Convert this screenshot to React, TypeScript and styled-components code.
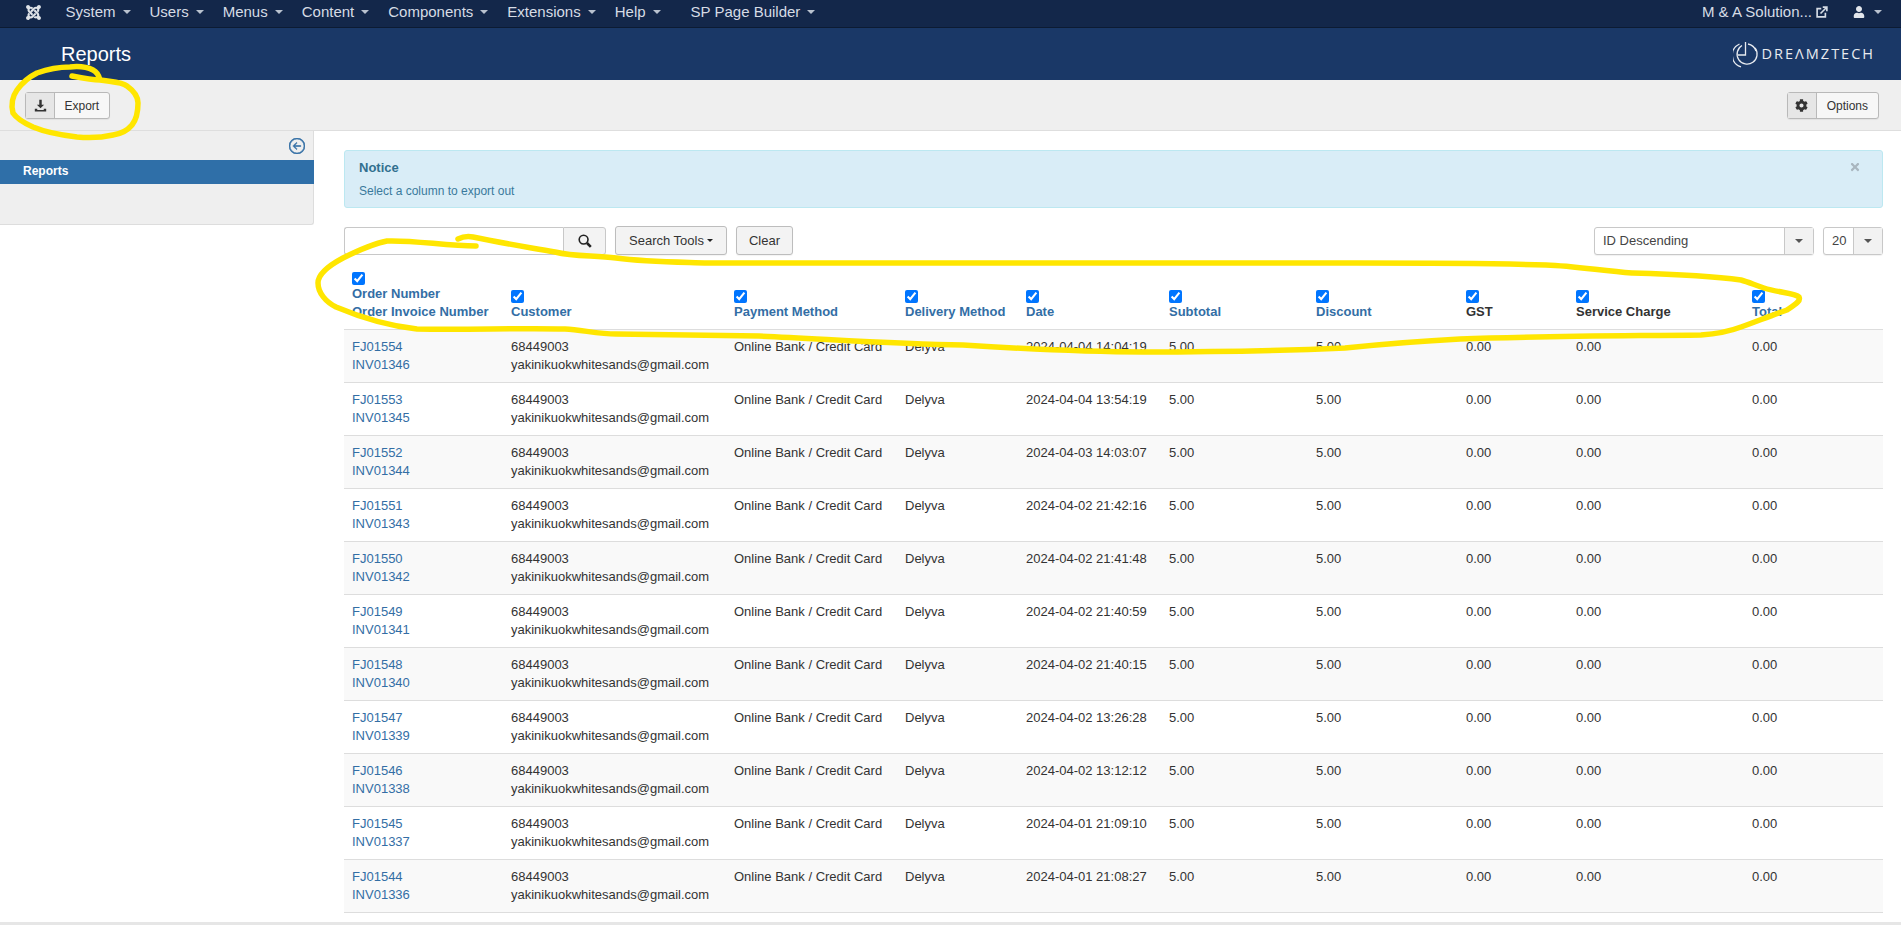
import React from "react";
import styled, { createGlobalStyle } from "styled-components";
import { FaJoomla, FaCog, FaUser, FaTimes } from "react-icons/fa";
import { BsArrowLeftCircle } from "react-icons/bs";

const colors = {
  navDark: "#13274a",
  header: "#1a3867",
  toolbar: "#efefef",
  link: "#336ea5",
  text: "#333333",
  rule: "#dddddd",
};

const GlobalStyle = createGlobalStyle`
  html, body {
    margin: 0;
    padding: 0;
    background: #fff;
    font-family: "Liberation Sans", Arial, sans-serif;
    font-size: 13px;
    line-height: 18px;
    color: ${colors.text};
  }
`;

const Page = styled.div`
  position: relative;
  width: 100%;
  height: 925px;
  overflow: hidden;
  display: flex;
  flex-direction: column;
`;

const TopNav = styled.nav`
  height: 24px;
  flex: none;
  background: ${colors.navDark};
  border-bottom: 1px solid #0c1b33;
  display: flex;
  align-items: center;
  padding: 0 19px 3px 25px;
  color: #d6dce5;
  font-size: 15px;
`;

const NavLogo = styled(FaJoomla)`
  width: 17px;
  height: 17px;
  margin-right: 14px;
  color: #dfe3e8;
`;

const NavItem = styled.div<{ $gap?: number }>`
  display: flex;
  align-items: center;
  gap: 7px;
  padding: 0 9.5px;
  margin-left: ${(p) => p.$gap ?? 0}px;
`;

const Caret = styled.span<{ $color?: string; $size?: number }>`
  display: inline-block;
  width: 0;
  height: 0;
  border-left: ${(p) => p.$size ?? 4}px solid transparent;
  border-right: ${(p) => p.$size ?? 4}px solid transparent;
  border-top: ${(p) => p.$size ?? 4}px solid ${(p) => p.$color ?? "#b9c2cf"};
`;

const NavRight = styled.div`
  margin-left: auto;
  display: flex;
  align-items: center;
`;

const SiteLink = styled.div`
  display: flex;
  align-items: center;
  gap: 4px;
  margin-right: 25px;
`;

const UserMenu = styled.div`
  display: flex;
  align-items: center;
  gap: 9px;
  svg {
    width: 12px;
    height: 12px;
    color: #e2e6ec;
  }
`;

const HeaderBar = styled.header`
  height: 52px;
  flex: none;
  background: ${colors.header};
  display: flex;
  align-items: center;
  justify-content: space-between;
  padding: 0 26px 0 61px;
`;

const PageTitle = styled.h1`
  margin: 0;
  color: #fff;
  font-size: 20px;
  font-weight: 400;
  line-height: 24px;
`;

const Logo = styled.div`
  display: flex;
  align-items: center;
  gap: 3px;
  color: #e8ebf0;
`;

const LogoWord = styled.span`
  font-family: "Open Sans", "Liberation Sans", sans-serif;
  font-size: 14.5px;
  letter-spacing: 2px;
  line-height: 20px;
`;

const Toolbar = styled.div`
  height: 49px;
  flex: none;
  background: ${colors.toolbar};
  border-bottom: 1px solid #dedede;
  display: flex;
  align-items: center;
  justify-content: space-between;
  padding: 1px 22px 0 25px;
`;

const ToolButton = styled.button`
  height: 27px;
  padding: 0;
  display: flex;
  align-items: stretch;
  background: #f7f7f7;
  border: 1px solid #b9b9b9;
  border-radius: 3px;
  box-shadow: 0 1px 1px rgba(0, 0, 0, 0.06);
  font: 12px "Liberation Sans", Arial, sans-serif;
  color: ${colors.text};
`;

const ToolIcon = styled.span`
  width: 28px;
  background: #e6e6e6;
  border-right: 1px solid #b9b9b9;
  display: flex;
  align-items: center;
  justify-content: center;
  svg {
    width: 13px;
    height: 13px;
  }
`;

const ToolLabel = styled.span<{ $pad: number }>`
  padding: 0 ${(p) => p.$pad}px;
  display: flex;
  align-items: center;
`;

const Body = styled.div`
  flex: 1;
  display: flex;
  align-items: flex-start;
`;

const Sidebar = styled.aside`
  width: 313px;
  height: 93px;
  flex: none;
  background: ${colors.toolbar};
  border-right: 1px solid ${colors.rule};
  border-bottom: 1px solid ${colors.rule};
  border-bottom-right-radius: 3px;
`;

const SidebarToggle = styled.div`
  height: 29px;
  display: flex;
  align-items: center;
  justify-content: flex-end;
  padding-right: 8px;
  svg {
    width: 16px;
    height: 16px;
    color: ${colors.link};
    stroke: ${colors.link};
    stroke-width: 0.6px;
  }
`;

const SidebarActive = styled.div`
  height: 24px;
  margin-right: -1px;
  background: #2f6fa8;
  color: #fff;
  font-size: 12px;
  font-weight: 700;
  line-height: 23px;
  padding-left: 23px;
`;

const Main = styled.main`
  flex: 1;
  min-width: 0;
  padding: 19px 18px 0 30px;
`;

const Notice = styled.div`
  position: relative;
  height: 56px;
  box-sizing: content-box;
  background: #d9edf7;
  border: 1px solid #bce8f1;
  border-radius: 3px;
  padding: 0 0 0 14px;
  color: #3a7a9c;
`;

const NoticeTitle = styled.div`
  font-size: 13px;
  font-weight: 700;
  color: #31708f;
  margin-top: 8px;
  line-height: 18px;
`;

const NoticeText = styled.div`
  font-size: 12px;
  margin-top: 5px;
  line-height: 18px;
`;

const NoticeClose = styled(FaTimes)`
  position: absolute;
  top: 10px;
  right: 21px;
  width: 12px;
  height: 12px;
  color: #a9b6bf;
`;

const FilterBar = styled.div`
  display: flex;
  align-items: center;
  margin-top: 18px;
  height: 29px;
`;

const SearchInput = styled.input`
  box-sizing: border-box;
  width: 219px;
  height: 28px;
  border: 1px solid #c8c8c8;
  border-right: none;
  border-radius: 3px 0 0 3px;
  background: #fff;
  outline: none;
`;

const SearchButton = styled.button`
  box-sizing: border-box;
  width: 43px;
  height: 28px;
  padding: 0;
  background: #f3f3f3;
  border: 1px solid #c8c8c8;
  border-radius: 0 3px 3px 0;
  display: flex;
  align-items: center;
  justify-content: center;
  margin-right: 9px;
`;

const FilterButton = styled.button<{ $w: number; $ml?: number }>`
  box-sizing: border-box;
  width: ${(p) => p.$w}px;
  height: 29px;
  margin-left: ${(p) => p.$ml ?? 0}px;
  padding: 0;
  display: flex;
  align-items: center;
  justify-content: center;
  gap: 3px;
  background: #f3f3f3;
  border: 1px solid #bdbdbd;
  border-radius: 3px;
  box-shadow: 0 1px 1px rgba(0, 0, 0, 0.05);
  font: 13px "Liberation Sans", Arial, sans-serif;
  color: ${colors.text};
`;

const Spacer = styled.div`
  flex: 1;
`;

const FakeSelect = styled.div<{ $w: number; $ml?: number }>`
  box-sizing: border-box;
  width: ${(p) => p.$w}px;
  height: 28px;
  margin-left: ${(p) => p.$ml ?? 0}px;
  display: flex;
  border: 1px solid #c8c8c8;
  border-radius: 3px;
  box-shadow: 0 1px 1px rgba(0, 0, 0, 0.06);
  background: #fff;
  color: #444;
`;

const SelectValue = styled.div`
  flex: 1;
  padding-left: 8px;
  line-height: 26px;
`;

const SelectArrow = styled.div`
  width: 28px;
  background: #f2f2f2;
  border-left: 1px solid #c8c8c8;
  display: flex;
  align-items: center;
  justify-content: center;
`;

const Table = styled.table`
  width: 100%;
  margin-top: 7px;
  border-collapse: collapse;
  table-layout: fixed;
`;

const Col = styled.col<{ $w?: number }>`
  width: ${(p) => (p.$w ? `${p.$w}px` : "auto")};
`;

const Th = styled.th<{ $plain?: boolean }>`
  padding: 8px;
  text-align: left;
  vertical-align: bottom;
  font-size: 13px;
  font-weight: 700;
  line-height: 18px;
  white-space: nowrap;
  color: ${(p) => (p.$plain ? colors.text : colors.link)};
  border-bottom: 1px solid ${colors.rule};
`;

const Check = styled.input`
  display: block;
  width: 13px;
  height: 13px;
  margin: 2px 0 0;
`;

const Tr = styled.tr`
  &:nth-child(odd) {
    background: #f9f9f9;
  }
`;

const Td = styled.td`
  padding: 8px;
  vertical-align: top;
  line-height: 18px;
  height: 36px;
  white-space: nowrap;
  border-bottom: 1px solid ${colors.rule};
`;

const OrderLink = styled.a`
  display: block;
  color: ${colors.link};
`;

const FooterBar = styled.div`
  height: 3px;
  flex: none;
  background: #e6e6e6;
`;

const Scribbles = styled.svg`
  position: absolute;
  top: 0;
  left: 0;
  width: 1901px;
  height: 925px;
  pointer-events: none;
  fill: none;
  stroke: #ffe600;
  stroke-width: 5.5;
  stroke-linecap: round;
  stroke-linejoin: round;
`;

const menus = ["System", "Users", "Menus", "Content", "Components", "Extensions", "Help"];

const columns = [
  { w: 223, label: "Customer" },
  { w: 171, label: "Payment Method" },
  { w: 121, label: "Delivery Method" },
  { w: 143, label: "Date" },
  { w: 147, label: "Subtotal" },
  { w: 150, label: "Discount" },
  { w: 110, label: "GST", plain: true },
  { w: 176, label: "Service Charge", plain: true },
  { label: "Total" },
];

const rows = [
  ["FJ01554", "INV01346", "2024-04-04 14:04:19"],
  ["FJ01553", "INV01345", "2024-04-04 13:54:19"],
  ["FJ01552", "INV01344", "2024-04-03 14:03:07"],
  ["FJ01551", "INV01343", "2024-04-02 21:42:16"],
  ["FJ01550", "INV01342", "2024-04-02 21:41:48"],
  ["FJ01549", "INV01341", "2024-04-02 21:40:59"],
  ["FJ01548", "INV01340", "2024-04-02 21:40:15"],
  ["FJ01547", "INV01339", "2024-04-02 13:26:28"],
  ["FJ01546", "INV01338", "2024-04-02 13:12:12"],
  ["FJ01545", "INV01337", "2024-04-01 21:09:10"],
  ["FJ01544", "INV01336", "2024-04-01 21:08:27"],
];

const ExportIcon = () => (
  <svg viewBox="0 0 16 16" fill="#333">
    <path d="M6.5 1h3v6h3L8 11.5 3.5 7h3z" />
    <path d="M1 12h3v1.5h8V12h3v3.5H1z" />
  </svg>
);

const NewTabIcon = () => (
  <svg width="12" height="12" viewBox="0 0 16 16" fill="none" stroke="#d6dce5" strokeWidth="2.2">
    <path d="M7 3.5H1.5v11h11V9" />
    <path d="M6 10 14 2M9 1.5h5.5V7" />
  </svg>
);

const SearchIcon = () => (
  <svg width="14" height="14" viewBox="0 0 14 14" fill="none" stroke="#222">
    <circle cx="5.6" cy="5.6" r="4.4" strokeWidth="1.6" />
    <path d="M9 9l3.8 3.8" strokeWidth="2.6" />
  </svg>
);

const DreamztechMark = () => (
  <svg width="26" height="27" viewBox="0 0 26 27" fill="none" stroke="#e8ebf0" strokeWidth="1.3">
    <path d="M9 4.5a10 10 0 1 0 13 2.5" />
    <path d="M6.5 3A12.2 12.2 0 0 0 8 25.8" />
    <path d="M12.5 1v13H5" />
    <path d="M15 3a10.5 10.5 0 0 1 8 7" />
  </svg>
);

export default function App() {
  return (
    <Page>
      <GlobalStyle />
      <TopNav>
        <NavLogo />
        {menus.map((m) => (
          <NavItem key={m}>
            {m}
            <Caret />
          </NavItem>
        ))}
        <NavItem $gap={11}>
          SP Page Builder
          <Caret />
        </NavItem>
        <NavRight>
          <SiteLink>
            M &amp; A Solution...
            <NewTabIcon />
          </SiteLink>
          <UserMenu>
            <FaUser />
            <Caret />
          </UserMenu>
        </NavRight>
      </TopNav>

      <HeaderBar>
        <PageTitle>Reports</PageTitle>
        <Logo>
          <DreamztechMark />
          <LogoWord>DREΛMZTECH</LogoWord>
        </Logo>
      </HeaderBar>

      <Toolbar>
        <ToolButton>
          <ToolIcon>
            <ExportIcon />
          </ToolIcon>
          <ToolLabel $pad={9.5}>Export</ToolLabel>
        </ToolButton>
        <ToolButton>
          <ToolIcon>
            <FaCog />
          </ToolIcon>
          <ToolLabel $pad={10}>Options</ToolLabel>
        </ToolButton>
      </Toolbar>

      <Body>
        <Sidebar>
          <SidebarToggle>
            <BsArrowLeftCircle />
          </SidebarToggle>
          <SidebarActive>Reports</SidebarActive>
        </Sidebar>

        <Main>
          <Notice>
            <NoticeClose />
            <NoticeTitle>Notice</NoticeTitle>
            <NoticeText>Select a column to export out</NoticeText>
          </Notice>

          <FilterBar>
            <SearchInput />
            <SearchButton>
              <SearchIcon />
            </SearchButton>
            <FilterButton $w={112}>
              Search Tools
              <Caret $color="#222" $size={3.5} />
            </FilterButton>
            <FilterButton $w={57} $ml={9}>
              Clear
            </FilterButton>
            <Spacer />
            <FakeSelect $w={220}>
              <SelectValue>ID Descending</SelectValue>
              <SelectArrow>
                <Caret $color="#555" />
              </SelectArrow>
            </FakeSelect>
            <FakeSelect $w={60} $ml={9}>
              <SelectValue>20</SelectValue>
              <SelectArrow>
                <Caret $color="#555" />
              </SelectArrow>
            </FakeSelect>
          </FilterBar>

          <Table>
            <colgroup>
              <Col $w={159} />
              {columns.map((c) => (
                <Col key={c.label} $w={c.w} />
              ))}
            </colgroup>
            <thead>
              <tr>
                <Th>
                  <Check type="checkbox" defaultChecked />
                  Order Number
                  <br />
                  Order Invoice Number
                </Th>
                {columns.map((c) => (
                  <Th key={c.label} $plain={c.plain}>
                    <Check type="checkbox" defaultChecked />
                    {c.label}
                  </Th>
                ))}
              </tr>
            </thead>
            <tbody>
              {rows.map(([order, invoice, date]) => (
                <Tr key={order}>
                  <Td>
                    <OrderLink>{order}</OrderLink>
                    <OrderLink>{invoice}</OrderLink>
                  </Td>
                  <Td>
                    68449003
                    <br />
                    yakinikuokwhitesands@gmail.com
                  </Td>
                  <Td>Online Bank / Credit Card</Td>
                  <Td>Delyva</Td>
                  <Td>{date}</Td>
                  <Td>5.00</Td>
                  <Td>5.00</Td>
                  <Td>0.00</Td>
                  <Td>0.00</Td>
                  <Td>0.00</Td>
                </Tr>
              ))}
            </tbody>
          </Table>
        </Main>
      </Body>

      <FooterBar />

      {/* marker annotations drawn over the screenshot */}
      <Scribbles viewBox="0 0 1901 925">
        <path d="M72 76C82 78 92 80 100 80C112 82 122 82 127 86C134 91 138 97 138 103C138 112 136 120 132 125C127 131 120 134 113 135C100 138 88 138 77 137C60 135 45 132 33 127C24 123 17 119 13 113C11 105 12 97 17 90C22 83 29 77 37 73C48 69 59 67 70 67C79 66 87 67 93 70C97 72 99 76 100 80" />
        <path d="M476 246C445 246 415 240 387 241C372 244 355 252 343 258C328 266 318 274 318 283C318 293 326 302 336 307C362 318 390 326 417 329C466 330 516 328 565 329C582 330 599 334 616 334C664 335 711 335 759 336C827 339 895 344 963 345C1025 349 1085 352 1144 352C1211 352 1278 351 1345 348C1384 344 1422 341 1460 339C1540 336 1620 336 1701 335C1715 334 1728 332 1741 327C1755 322 1775 314 1787 310C1796 304 1801 301 1799 297C1795 293 1780 293 1764 288C1755 285 1748 282 1741 280C1705 275 1668 274 1632 273C1603 271 1575 266 1546 265C1483 263 1420 263 1356 263C1270 263 1185 263 1100 263C969 263 838 263 708 263C677 262 646 262 616 258C595 255 575 257 555 252C527 247 501 243 473 237C468 236 462 237 458 239" />
      </Scribbles>
    </Page>
  );
}
